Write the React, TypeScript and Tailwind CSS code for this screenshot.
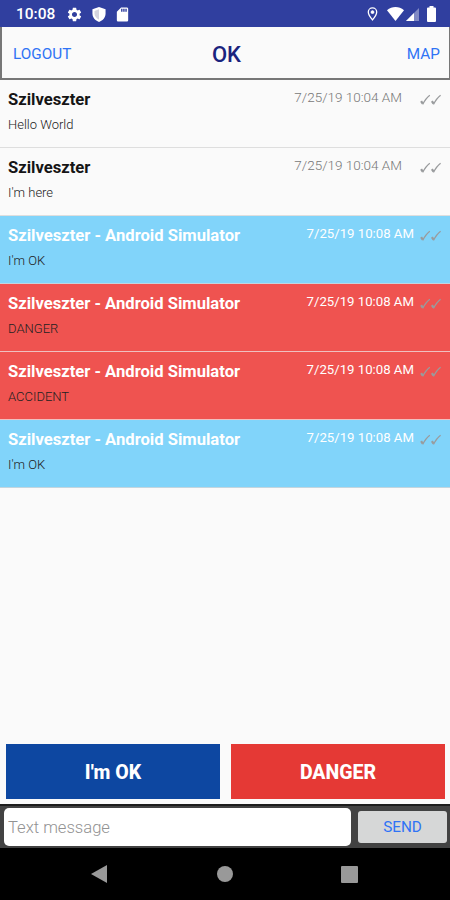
import { MdSettings, MdSdCard } from 'react-icons/md';

type Message = {
    id: number;
    author: string;
    text: string;
    date: string;
    kind: 'text' | 'ok' | 'danger';
};

const MESSAGES: Message[] = [
    { id: 1, author: 'Szilveszter', text: 'Hello World', date: '7/25/19 10:04 AM', kind: 'text' },
    { id: 2, author: 'Szilveszter', text: "I'm here", date: '7/25/19 10:04 AM', kind: 'text' },
    { id: 3, author: 'Szilveszter - Android Simulator', text: "I'm OK", date: '7/25/19 10:08 AM', kind: 'ok' },
    { id: 4, author: 'Szilveszter - Android Simulator', text: 'DANGER', date: '7/25/19 10:08 AM', kind: 'danger' },
    { id: 5, author: 'Szilveszter - Android Simulator', text: 'ACCIDENT', date: '7/25/19 10:08 AM', kind: 'danger' },
    { id: 6, author: 'Szilveszter - Android Simulator', text: "I'm OK", date: '7/25/19 10:08 AM', kind: 'ok' },
];

const ROW_COLORS: Record<Message['kind'], string> = {
    text: 'bg-[#fafafa] border-[#dedede]',
    ok: 'bg-[#81d4fa] border-[#c3d5de]',
    danger: 'bg-[#ef5350] border-[#efc0c0]',
};

function StatusBar() {
    return (
        <div className="flex h-[27px] shrink-0 items-center bg-[#303f9f] pt-px pr-[14px] pl-4 text-white">
            <span className="w-[39px] pt-px text-[15.5px] leading-none font-medium whitespace-nowrap">10:08</span>
            <MdSettings className="ml-[11px] size-[17px]" />
            <svg className="ml-[9px] h-[15px] w-[14px]" viewBox="0 0 14 16">
                <path d="M7 0 14 2.5V7c0 4.2-2.8 7.4-7 9-4.2-1.6-7-4.8-7-9V2.5Z" fill="#fff" />
                <path d="M7 2.5v11C4.1 12.2 2.2 9.8 2.2 7V4.2Z" fill="#d3d4df" />
            </svg>
            <MdSdCard className="ml-[8px] size-[17px]" />
            <div className="ml-auto flex items-center">
                <svg className="h-[14px] w-[11px]" viewBox="0 0 11 15" fill="none" stroke="#fff">
                    <path d="M5.5 1C3 1 1 2.9 1 5.4 1 8.5 5.5 13.8 5.5 13.8S10 8.5 10 5.4C10 2.9 8 1 5.5 1Z" strokeWidth="1.4" />
                    <circle cx="5.5" cy="5.5" r="1.5" fill="#fff" />
                </svg>
                <svg className="ml-[9px] h-[14px] w-[17px]" viewBox="0 0 17 14">
                    <path d="M0 3.2C5-1 12-1 17 3.2L8.5 14Z" fill="#fff" />
                </svg>
                <svg className="ml-[2px] size-[13px]" viewBox="0 0 13 13">
                    <path d="M13 0V13H0Z" fill="#8089c4" />
                    <path d="M8 5V13H0Z" fill="#fff" />
                </svg>
                <svg className="ml-2 h-4 w-[9px]" viewBox="0 0 9 16">
                    <path d="M2.5 0h4v1.5H8a1 1 0 0 1 1 1V15a1 1 0 0 1-1 1H1a1 1 0 0 1-1-1V2.5a1 1 0 0 1 1-1h1.5Z" fill="#fff" />
                </svg>
            </div>
        </div>
    );
}

function Ticks() {
    return (
        <svg className="mt-[14px] h-[12px] w-[22px]" viewBox="0 0 22 12" fill="none" stroke="#999b9d">
            <path d="M1.1 7.2 2.7 9.7M11.9 7.2 13.5 9.7" strokeWidth="2.2" />
            <path d="M2.6 10.4C4.6 6.7 6.4 3.7 9.8 1.2M13.4 10.4C15.4 6.7 17.2 3.7 20.6 1.2" strokeWidth="1.3" />
        </svg>
    );
}

function MessageRow({ message }: { message: Message }) {
    const own = message.kind !== 'text';

    return (
        <li className={`flex h-[68px] items-start border-b-[1.5px] pr-2 pl-2 ${ROW_COLORS[message.kind]}`}>
            <div className="flex-1">
                <p className={`mt-[10px] text-[16.6px] leading-5 font-bold whitespace-nowrap ${own ? 'text-white' : 'text-[#151515]'}`}>
                    {message.author}
                </p>
                <p className="mt-[7px] text-[13px] leading-4 font-light text-[#222]">{message.text}</p>
            </div>
            <span className={`leading-4 whitespace-nowrap ${own ? 'mt-[10px] mr-[6px] text-[13.2px] text-white' : 'mt-[9px] mr-[18px] text-[13.5px] font-light text-[#777]'}`}>
                {message.date}
            </span>
            <Ticks />
        </li>
    );
}

export default function App() {
    return (
        <div className="flex h-[900px] w-[450px] flex-col overflow-hidden bg-[#fafafa] font-[Roboto,sans-serif]">
            <StatusBar />

            {/* Header */}
            <header className="grid h-[53px] shrink-0 grid-cols-3 items-center border-r border-b-2 border-l-2 border-[#777] pt-1 pr-[9px] pl-[11px]">
                <button className="text-left text-[15.3px] text-[#2f73f5]">LOGOUT</button>
                <h1 className="text-center text-[22px] font-medium text-[#1a237e]">OK</h1>
                <button className="text-right text-[15.3px] text-[#2f73f5]">MAP</button>
            </header>

            {/* Messages */}
            <ul className="flex-1">
                {MESSAGES.map((message) => (
                    <MessageRow key={message.id} message={message} />
                ))}
            </ul>

            {/* Quick actions */}
            <div className="mb-[5px] grid h-[55px] shrink-0 grid-cols-2 gap-[11px] pr-[5px] pl-[6px] text-[19.5px] font-extrabold text-white">
                <button className="bg-[#0d47a1] pt-[2px]">I'm OK</button>
                <button className="bg-[#e53935] pt-[2px]">DANGER</button>
            </div>

            {/* Text input */}
            <div className="flex h-[44px] shrink-0 items-center border-t-2 border-[#1c1c1c] bg-[#424242] pr-[3px] pl-1">
                <input
                    className="h-[38px] w-[347px] rounded-[5px] bg-white px-[4px] text-[16.6px] font-light placeholder:text-[#929292]"
                    placeholder="Text message"
                />
                <button className="ml-[7px] h-8 flex-1 rounded-[3px] bg-[#d6d7d7] pt-px text-[15.3px] text-[#2f73f5]">SEND</button>
            </div>

            {/* Android navigation */}
            <nav className="flex h-[52px] shrink-0 items-center bg-black pl-[91px]">
                <svg className="h-[18px] w-4" viewBox="0 0 16 18">
                    <path d="M16 0v18L0 9Z" fill="#999" />
                </svg>
                <span className="ml-[110px] size-4 rounded-full bg-[#999]" />
                <span className="ml-[108px] size-[17px] rounded-[1px] bg-[#999]" />
            </nav>
        </div>
    );
}
